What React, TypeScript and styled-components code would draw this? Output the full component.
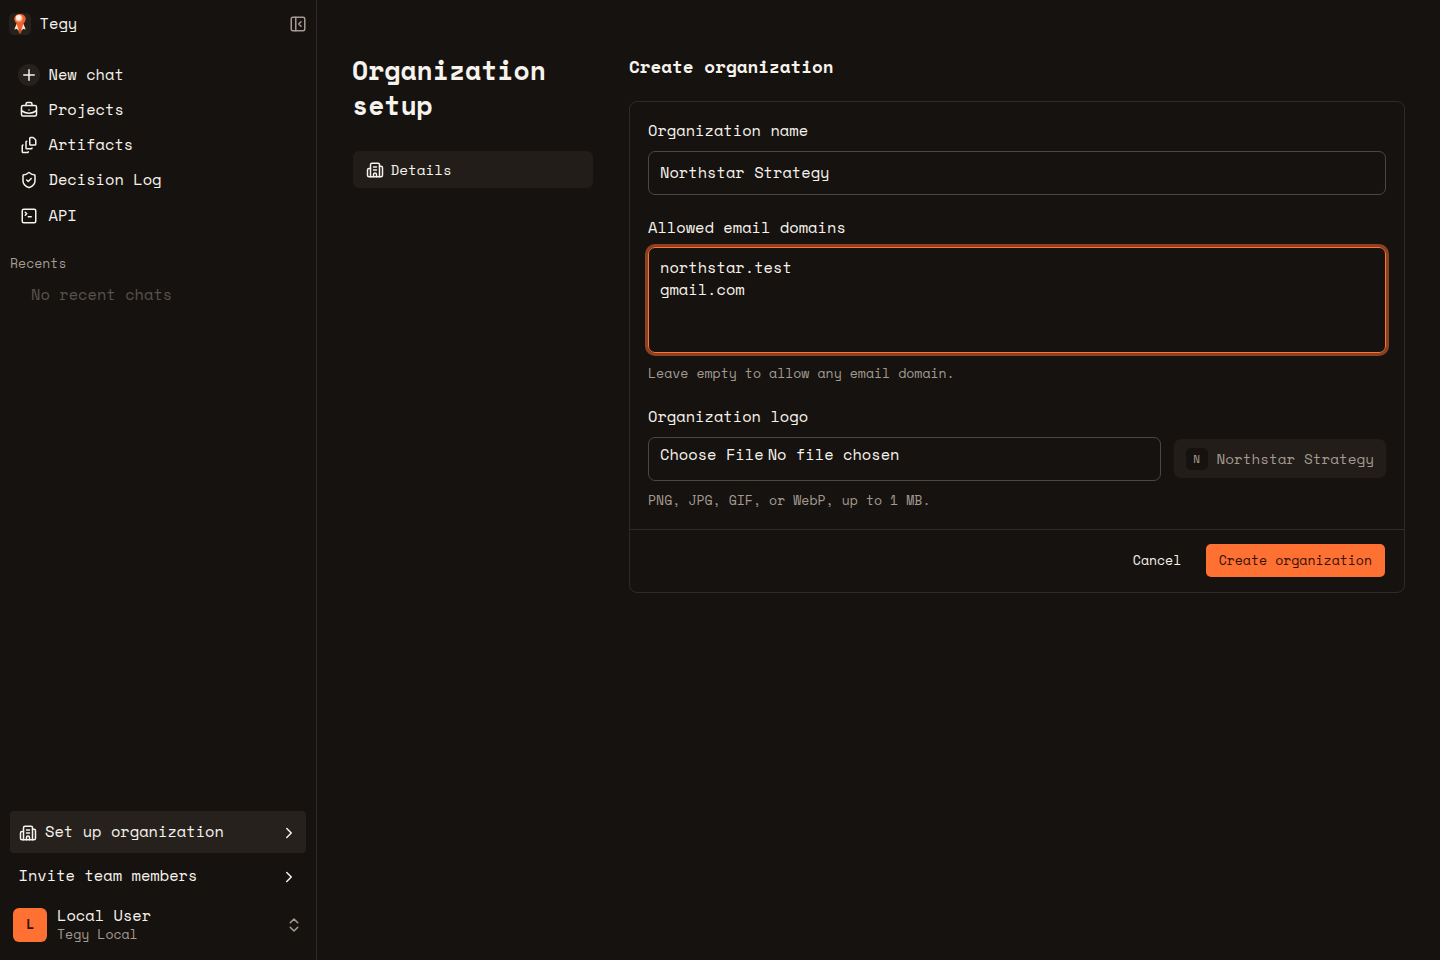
import React from "react";
import styled, { createGlobalStyle, css } from "styled-components";
import {
  BriefcaseBusiness,
  Building2,
  ChevronRight,
  ChevronsUpDown,
  FileStack,
  PanelLeftClose,
  Plus,
  ShieldCheck,
  SquareTerminal,
} from "lucide-react";

const color = {
  bg: "#16120f",
  raised: "#221d19",
  active: "#26211d",
  line: "#2e2a27",
  field: "#4b4744",
  text: "#f6f2ec",
  muted: "#a39b92",
  faint: "#56524e",
  accent: "#ff7033",
  ring: "#8c4220",
};

const GlobalStyle = createGlobalStyle`
  *, *::before, *::after { box-sizing: border-box; }
  body {
    margin: 0;
    background: ${color.bg};
    color: ${color.text};
    font-family: "Space Mono", "DejaVu Sans Mono", monospace;
    font-size: 15.4px;
    line-height: 22px;
  }
  h1, h2, p { margin: 0; }
  button, input, textarea { font: inherit; color: inherit; }
  svg { flex: none; display: block; }
`;

const Shell = styled.div`
  display: grid;
  grid-template-columns: 317px 1fr;
  height: 960px;
  overflow: hidden;
`;

const Sidebar = styled.aside`
  display: flex;
  flex-direction: column;
  border-right: 1px solid ${color.line};
`;

const Brand = styled.header`
  display: flex;
  align-items: center;
  height: 47px;
  padding: 0 9.3px 0 9px;
`;

const BrandMark = styled.span`
  display: grid;
  place-items: center;
  width: 22px;
  height: 22px;
  margin-right: 8.6px;
  border-radius: 5px;
  background: ${color.active};
`;

const BrandName = styled.span`
  flex: 1;
`;

const CollapseButton = styled.button`
  display: flex;
  padding: 0;
  border: 0;
  background: none;
  color: ${color.muted};
`;

const Nav = styled.nav`
  display: flex;
  flex-direction: column;
  padding: 10px 10px 0;
`;

const NavItem = styled.a`
  display: flex;
  align-items: center;
  gap: 8.5px;
  height: 35.25px;
  padding: 0 8px;
`;

const NavIcon = styled.span<{ $filled?: boolean }>`
  display: grid;
  place-items: center;
  width: 22px;
  height: 22px;
  border-radius: 50%;
  background: ${(p) => (p.$filled ? color.active : "transparent")};
`;

const Recents = styled.section`
  flex: 1;
  padding: 18.75px 10px 0;
`;

const SectionLabel = styled.p`
  font-size: 13.2px;
  color: ${color.muted};
`;

const EmptyNote = styled.p`
  padding: 10px 21px;
  color: ${color.faint};
`;

const SidebarFooter = styled.footer`
  display: flex;
  flex-direction: column;
  padding: 0 10px 13px;
`;

const FooterLink = styled.a<{ $active?: boolean }>`
  display: flex;
  align-items: center;
  justify-content: space-between;
  height: ${(p) => (p.$active ? 42 : 46)}px;
  padding: 0 8px 0 ${(p) => (p.$active ? 9 : 8.5)}px;
  border-radius: 4px;
  ${(p) => p.$active && css`background: ${color.active};`}

  svg {
    margin-top: 2px;
  }
`;

const LinkLabel = styled.span`
  display: flex;
  align-items: center;
  gap: 8px;
`;

const Account = styled.div`
  display: flex;
  align-items: center;
  gap: 9.6px;
  height: 48px;
  padding: 3.5px 3px 0 3.4px;
`;

const Avatar = styled.span`
  display: grid;
  place-items: center;
  width: 34px;
  height: 34px;
  padding-bottom: 1px;
  border-radius: 6px;
  background: ${color.accent};
  color: #321208;
  font-size: 13.2px;
  font-weight: 700;
  line-height: 20px;
`;

const AccountText = styled.div`
  flex: 1;
  display: flex;
  flex-direction: column;
  padding-top: 0.5px;
  line-height: 19px;
`;

const AccountOrg = styled.span`
  color: ${color.muted};
  font-size: 13.2px;
`;

const Main = styled.main`
  display: grid;
  grid-template-columns: 241px 776px;
  column-gap: 36px;
  align-items: start;
  padding: 53px 35px;
`;

const SetupNav = styled.div`
  display: flex;
  flex-direction: column;
  gap: 28px;
`;

const Title = styled.h1`
  font-size: 26.4px;
  line-height: 35px;
`;

const Tab = styled.a`
  display: flex;
  align-items: center;
  gap: 6.5px;
  height: 37px;
  margin-left: 1px;
  padding: 0 13px;
  border-radius: 6px;
  background: ${color.raised};
  font-size: 14.3px;
`;

const Heading = styled.h2`
  margin-bottom: 22px;
  font-size: 17.6px;
  line-height: 26px;
`;

const Card = styled.form`
  border: 1px solid ${color.line};
  border-radius: 8px;
`;

const CardBody = styled.div`
  display: flex;
  flex-direction: column;
  gap: 22px;
  padding: 18px;
`;

const Field = styled.div`
  display: flex;
  flex-direction: column;
`;

const Label = styled.label<{ $tight?: boolean }>`
  margin-bottom: ${(p) => (p.$tight ? 8 : 9)}px;
`;

const fieldBox = css`
  width: 100%;
  border: 1px solid ${color.field};
  border-radius: 7px;
  background: transparent;
  outline: none;
`;

const TextInput = styled.input`
  ${fieldBox}
  height: 44px;
  padding: 0 11px 2px;
`;

const TextArea = styled.textarea`
  ${fieldBox}
  display: block;
  height: 106px;
  padding: 9px 11px;
  border-color: ${color.accent};
  box-shadow: 0 0 0 3px ${color.ring};
  resize: none;
`;

const Hint = styled.p<{ $tight?: boolean }>`
  margin-top: ${(p) => (p.$tight ? 9 : 10)}px;
  color: ${color.muted};
  font-size: 13.2px;
  line-height: 21px;
`;

const LogoRow = styled.div`
  display: flex;
  align-items: flex-start;
  gap: 13px;
`;

const FilePicker = styled.div`
  ${fieldBox}
  flex: 1;
  display: flex;
  gap: 4px;
  height: 44px;
  padding: 6px 11px;
`;

const Preview = styled.div`
  display: flex;
  align-items: center;
  gap: 9px;
  height: 39px;
  margin-top: 2px;
  padding: 0 12px;
  border-radius: 7px;
  background: ${color.raised};
  color: ${color.muted};
  font-size: 14.3px;
`;

const Initial = styled.span`
  display: grid;
  place-items: center;
  width: 22px;
  height: 22px;
  border-radius: 5px;
  background: ${color.bg};
  font-size: 11px;
`;

const CardFooter = styled.div`
  display: flex;
  align-items: center;
  justify-content: flex-end;
  gap: 11.4px;
  height: 63px;
  padding: 0 19px 1px;
  border-top: 1px solid ${color.line};
`;

const Button = styled.button<{ $primary?: boolean }>`
  height: 33px;
  padding: 0 13px 2px;
  border: 0;
  border-radius: 5px;
  background: ${(p) => (p.$primary ? color.accent : "transparent")};
  color: ${(p) => (p.$primary ? "#321208" : color.text)};
  font-size: 13.2px;
`;

const Rocket = () => (
  <svg width="14" height="22" viewBox="0 0 14 22">
    <path d="M3.5 11 1.3 16.5l2.700-.8 1 1.800h4l1-1.800 2.700.8L10.500 11z" fill="#ffe9d8" />
    <path d="M5.500 16h3v3L7 21l-1.500-2z" fill="#c9501f" />
    <path d="M7 1C3.500 1 1.300 3.300 1.300 6c0 2.600 2.200 4 2.700 6l1.200 4h3.600l1.200-4c.5-2 2.700-3.400 2.700-6C12.700 3.300 10.500 1 7 1z" fill="#f2602b" />
    <circle cx="6" cy="5.300" r="3.500" fill="#ffb48e" />
    <circle cx="5.600" cy="4.700" r="2.600" fill="#fff1e8" />
  </svg>
);

const navItems = [
  { label: "New chat", Icon: Plus, filled: true },
  { label: "Projects", Icon: BriefcaseBusiness },
  { label: "Artifacts", Icon: FileStack },
  { label: "Decision Log", Icon: ShieldCheck },
  { label: "API", Icon: SquareTerminal },
];

export default function App() {
  return (
    <>
      <GlobalStyle />
      <Shell>
        <Sidebar>
          <Brand>
            <BrandMark><Rocket /></BrandMark>
            <BrandName>Tegy</BrandName>
            <CollapseButton type="button" aria-label="Collapse sidebar">
              <PanelLeftClose size={18} />
            </CollapseButton>
          </Brand>
          <Nav>
            {navItems.map(({ label, Icon, filled }) => (
              <NavItem key={label}>
                <NavIcon $filled={filled}><Icon size={18} /></NavIcon>
                {label}
              </NavItem>
            ))}
          </Nav>
          <Recents>
            <SectionLabel>Recents</SectionLabel>
            <EmptyNote>No recent chats</EmptyNote>
          </Recents>
          <SidebarFooter>
            <FooterLink $active>
              <LinkLabel><Building2 size={18} />Set up organization</LinkLabel>
              <ChevronRight size={18} />
            </FooterLink>
            <FooterLink>
              <LinkLabel>Invite team members</LinkLabel>
              <ChevronRight size={18} />
            </FooterLink>
            <Account>
              <Avatar>L</Avatar>
              <AccountText>
                <span>Local User</span>
                <AccountOrg>Tegy Local</AccountOrg>
              </AccountText>
              <ChevronsUpDown size={18} color={color.muted} />
            </Account>
          </SidebarFooter>
        </Sidebar>
        <Main>
          <SetupNav>
            <Title>Organization setup</Title>
            <Tab><Building2 size={18} />Details</Tab>
          </SetupNav>
          <section>
            <Heading>Create organization</Heading>
            <Card>
              <CardBody>
                <Field>
                  <Label htmlFor="name">Organization name</Label>
                  <TextInput id="name" defaultValue="Northstar Strategy" />
                </Field>
                <Field>
                  <Label htmlFor="domains" $tight>Allowed email domains</Label>
                  <TextArea id="domains" defaultValue={"northstar.test\ngmail.com"} />
                  <Hint>Leave empty to allow any email domain.</Hint>
                </Field>
                <Field>
                  <Label>Organization logo</Label>
                  <LogoRow>
                    <FilePicker><span>Choose File</span><span>No file chosen</span></FilePicker>
                    <Preview><Initial>N</Initial>Northstar Strategy</Preview>
                  </LogoRow>
                  <Hint $tight>PNG, JPG, GIF, or WebP, up to 1 MB.</Hint>
                </Field>
              </CardBody>
              <CardFooter>
                <Button type="button">Cancel</Button>
                <Button type="button" $primary>Create organization</Button>
              </CardFooter>
            </Card>
          </section>
        </Main>
      </Shell>
    </>
  );
}
